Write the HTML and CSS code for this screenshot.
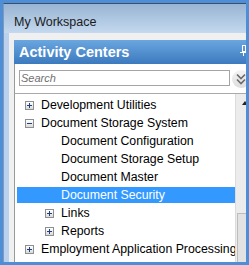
FILE: index.html
```html
<!DOCTYPE html>
<html lang="en">
<head>
    <meta charset="UTF-8">
    <meta name="viewport" content="width=device-width, initial-scale=1.0">
    <title>My Workspace</title>
    <link rel="stylesheet" href="styles.css">
</head>
<body>
    <div class="window">
        <div class="window-title">My Workspace</div>
        <div class="window-body">
            <div class="panel">
                <div class="panel-header">
                    <span>Activity Centers</span>
                    <svg class="pin" width="8" height="11" viewBox="0 0 8 11">
                        <rect x="2.5" y="0.5" width="3" height="6" fill="none" stroke="#fff"/>
                        <path d="M0 7.5h8M3.5 8v3" stroke="#fff"/>
                    </svg>
                </div>
                <div class="search-row">
                    <input class="search" type="text" placeholder="Search">
                    <span class="expand-all">
                        <svg width="18" height="18" viewBox="0 0 18 18">
                            <path d="M5 4.5l4 4 4-4M5 9.5l4 4 4-4" fill="none" stroke="#6a6a6a" stroke-width="1.6"/>
                        </svg>
                    </span>
                </div>
                <div class="tree">
                    <div class="tree-items">
                        <div class="node"><span class="toggle plus"></span>Development Utilities</div>
                        <div class="node"><span class="toggle"></span>Document Storage System</div>
                        <div class="node sub"><span class="toggle leaf"></span>Document Configuration</div>
                        <div class="node sub"><span class="toggle leaf"></span>Document Storage Setup</div>
                        <div class="node sub"><span class="toggle leaf"></span>Document Master</div>
                        <div class="node sub selected"><span class="toggle leaf"></span>Document Security</div>
                        <div class="node sub"><span class="toggle plus"></span>Links</div>
                        <div class="node sub"><span class="toggle plus"></span>Reports</div>
                        <div class="node"><span class="toggle plus"></span>Employment Application Processing</div>
                    </div>
                    <div class="scrollbar">
                        <div class="scroll-up"><span class="arrow"></span></div>
                        <div class="scroll-thumb"></div>
                    </div>
                </div>
            </div>
        </div>
    </div>
</body>
</html>
```

FILE: styles.css
```css
body {
    margin: 0;
    width: 249px;
    height: 265px;
    overflow: hidden;
    background-color: #4d8ed9;
    font-family: "Liberation Sans", Arial, sans-serif;
}
.window {
    box-sizing: border-box;
    margin: 3px 0 0 3px;
    width: 243px;
    height: 259px;
    overflow: hidden;
    background-color: #b9d1ee;
    border-top: 1px solid #3f4f63;
    border-left: 1px solid #8498b0;
}
.window-title {
    box-sizing: border-box;
    height: 29px;
    padding: 11px 0 0 10px;
    font-size: 12.5px;
    line-height: 15px;
    color: #1b1b1b;
    background: linear-gradient(#98b4d3, #c4d9ef);
}
.window-body {
    margin-left: 5px;
    padding: 7px 0 0 5px;
    background-color: #f0f0f0;
    height: 300px;
}
.panel {
    width: 240px;
    background-color: white;
}
.panel-header {
    display: flex;
    justify-content: space-between;
    height: 24px;
    padding-left: 5px;
    line-height: 24px;
    font-size: 14.5px;
    font-weight: bold;
    color: white;
    background: linear-gradient(#6aa6df, #3c7abf);
}
.pin {
    margin: 5px 6px 0 0;
}
.search-row {
    display: flex;
    align-items: flex-start;
    height: 29px;
    box-sizing: border-box;
    padding: 6px 0 0 4px;
    border-left: 1px solid #9a9a9a;
}
.search {
    box-sizing: border-box;
    width: 211px;
    height: 16px;
    margin: 0;
    padding: 0 0 0 1px;
    border: 1px solid #a5a5a5;
    outline: none;
    font-family: "Liberation Sans", Arial, sans-serif;
    font-size: 11px;
}
.search::placeholder {
    color: #707070;
    font-style: italic;
}
.expand-all {
    display: flex;
    width: 18px;
    height: 18px;
    margin-left: 2px;
    border-radius: 50%;
    background: linear-gradient(#f4f4f4, #dedede);
}
.tree {
    display: flex;
    border-top: 1px solid #a9a9a9;
    border-left: 1px solid #9a9a9a;
    height: 200px;
}
.tree-items {
    width: 220px;
    padding: 3px 0 0 2px;
    box-sizing: border-box;
    overflow: hidden;
}
.node {
    display: flex;
    align-items: center;
    height: 16px;
    margin-bottom: 2px;
    padding-left: 8px;
    font-size: 12.3px;
    line-height: 16px;
    color: black;
    white-space: nowrap;
}
.node.sub {
    padding-left: 28px;
}
.node.selected {
    background-color: #3399ff;
    color: white;
}
.toggle {
    position: relative;
    flex: none;
    width: 7px;
    height: 7px;
    margin: 1px 7px 0 0;
    border: 1px solid #8f8f8f;
    background: linear-gradient(#ffffff, #dadada);
}
.toggle::before {
    content: "";
    position: absolute;
    left: 1px;
    top: 3px;
    width: 5px;
    height: 1px;
    background-color: #1f3f7f;
}
.toggle.plus::after {
    content: "";
    position: absolute;
    left: 3px;
    top: 1px;
    width: 1px;
    height: 5px;
    background-color: #1f3f7f;
}
.toggle.leaf {
    visibility: hidden;
}
.scrollbar {
    width: 17px;
    flex: none;
    background-color: #ececec;
    border-left: 1px solid #dcdcdc;
}
.scroll-up {
    display: flex;
    justify-content: center;
    align-items: center;
    height: 17px;
}
.arrow {
    width: 0;
    height: 0;
    border-left: 3.5px solid transparent;
    border-right: 3.5px solid transparent;
    border-bottom: 4px solid #222;
}
.scroll-thumb {
    margin: 102px 0 0 1px;
    height: 80px;
    border: 1px solid #bcbcbc;
    background-color: #e2e2e2;
}
```
